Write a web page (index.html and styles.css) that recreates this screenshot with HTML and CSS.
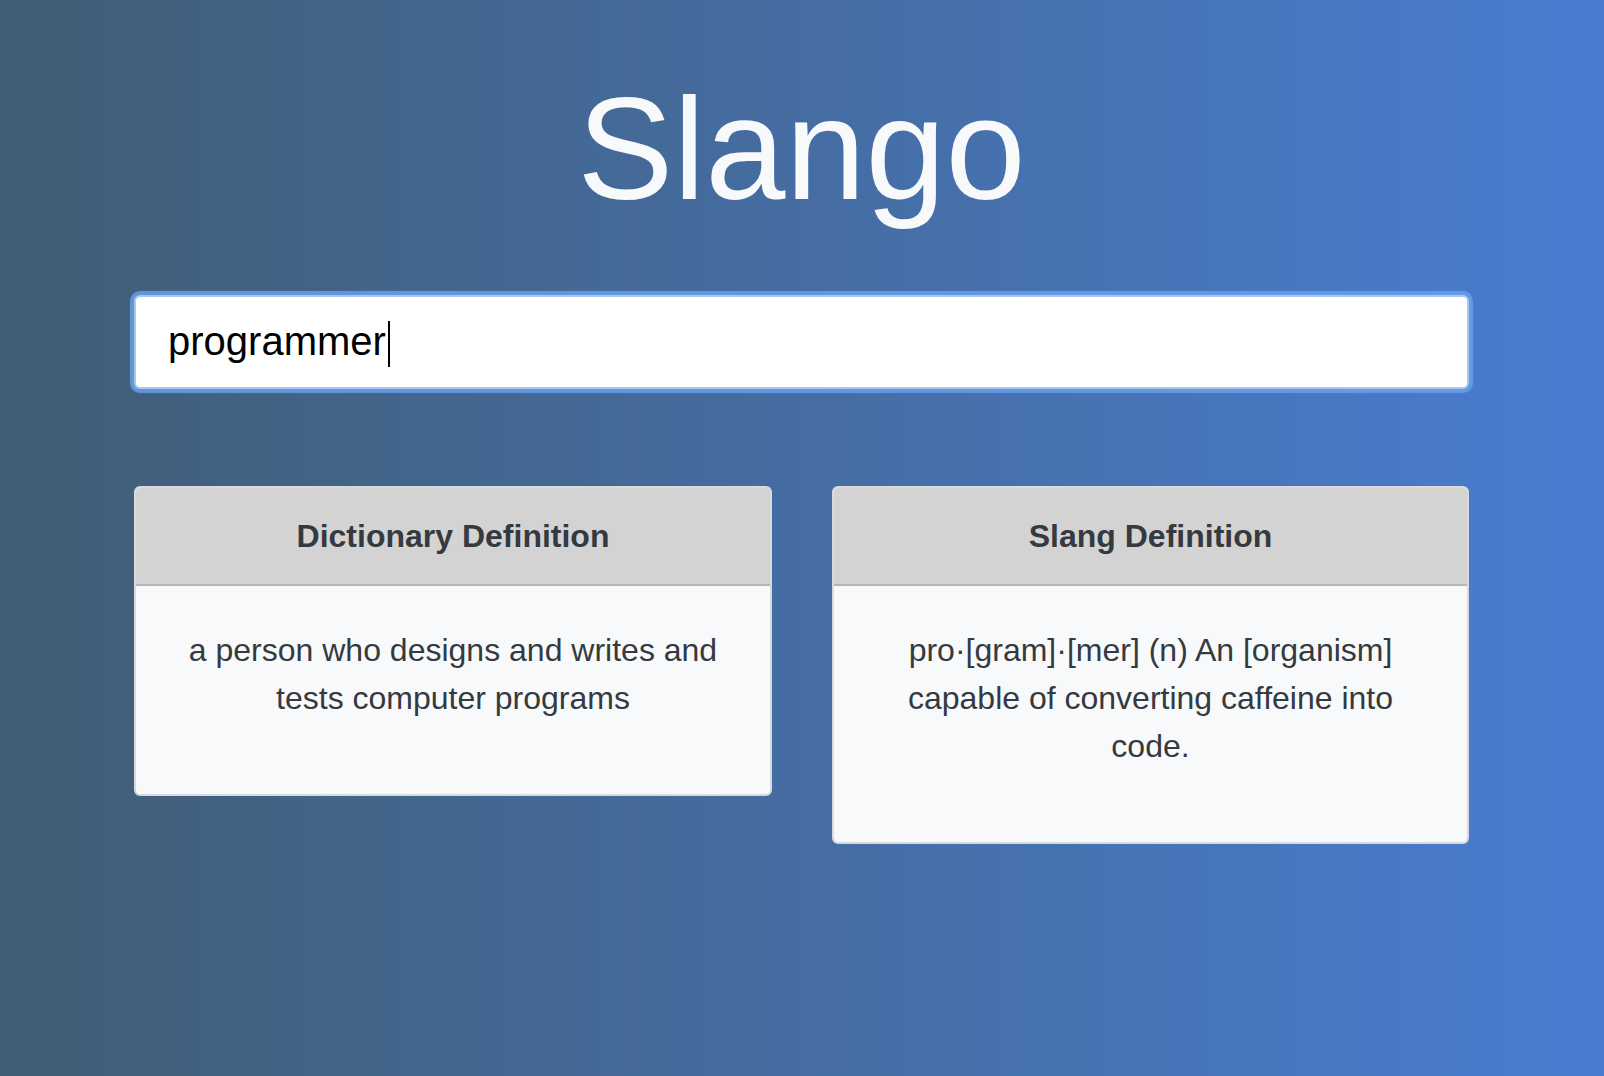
FILE: index.html
```html
<!DOCTYPE html>
<html lang="en">
<head>
<meta charset="utf-8">
<title>Slango</title>
<link rel="stylesheet" href="styles.css">
</head>
<body>
<main class="container">
  <h1 class="title">Slango</h1>
  <div class="search"><span class="search-text">programmer</span><span class="caret"></span></div>
  <div class="cards">
    <section class="card">
      <header class="card-header">Dictionary Definition</header>
      <div class="card-body"><p>a person who designs and writes and tests computer programs</p></div>
    </section>
    <section class="card">
      <header class="card-header">Slang Definition</header>
      <div class="card-body"><p>pro·[gram]·[mer] (n) An [organism] capable of converting caffeine into code.</p></div>
    </section>
  </div>
</main>
</body>
</html>
```
FILE: styles.css
```css
html, body {
  margin: 0;
  padding: 0;
}
body {
  min-height: 100vh;
  background: linear-gradient(to right, #405d74 0%, #4a7dd1 100%);
  font-family: "Liberation Sans", Arial, Helvetica, sans-serif;
  color: #343a40;
}
.container {
  width: 1335px;
  margin: 0 0 0 134px;
  padding-top: 64px;
}
.title {
  margin: 0 0 58px;
  text-align: center;
  font-size: 144px;
  font-weight: 400;
  line-height: 1.2;
  color: #f8f9fa;
}
.search {
  box-sizing: border-box;
  height: 94px;
  padding: 0 32px;
  background: #fff;
  border: 2px solid #a9c6ec;
  border-radius: 6px;
  box-shadow: 0 0 1px 4px rgba(104, 160, 236, 0.85);
  display: flex;
  align-items: center;
  font-size: 40px;
  color: #000;
}
.caret {
  display: inline-block;
  width: 2px;
  height: 46px;
  background: #000;
  margin-left: 2px;
  margin-top: 4px;
}
.cards {
  margin-top: 97px;
  display: grid;
  grid-template-columns: 638px 1fr;
  column-gap: 60px;
  align-items: start;
}
.card {
  background: #f8f9fa;
  border: 2px solid #d9dadb;
  border-radius: 6px;
  overflow: hidden;
}
.card-header {
  background: #d3d3d3;
  border-bottom: 2px solid #b7b7b7;
  padding: 24px 40px;
  font-size: 32px;
  line-height: 48px;
  font-weight: 700;
  text-align: center;
  color: #343a40;
}
.card-body {
  padding: 40px;
  text-align: center;
  font-size: 32px;
  line-height: 48px;
}
.card-body p {
  margin: 0 0 32px;
}
```
